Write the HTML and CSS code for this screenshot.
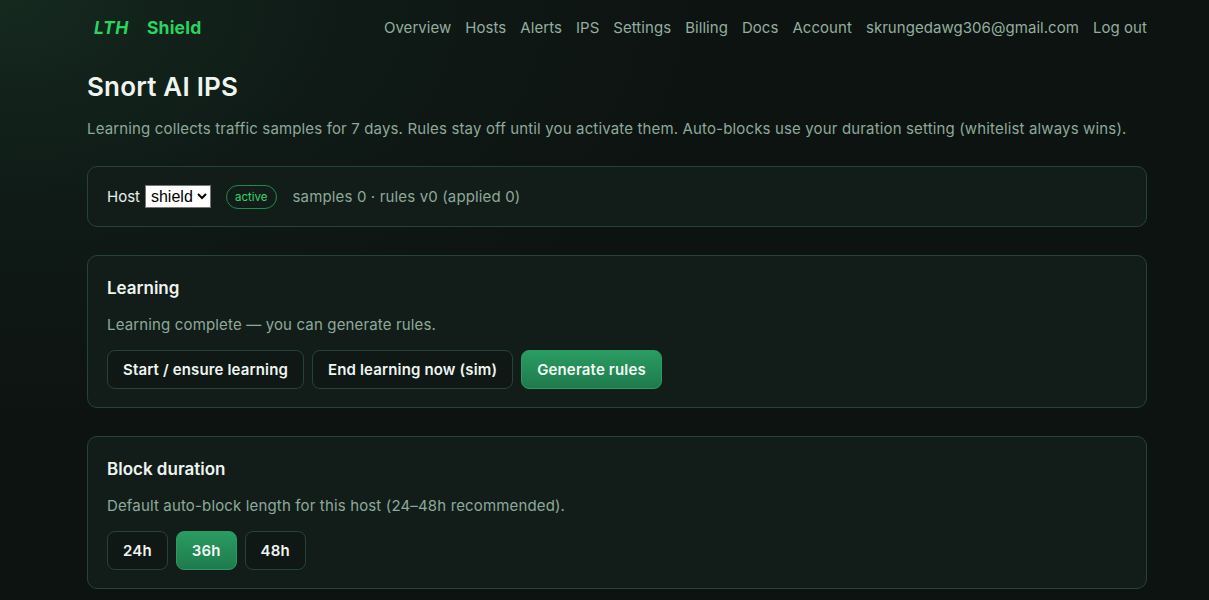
FILE: index.html
```html
<!DOCTYPE html>
<html lang="en">
<head>
<meta charset="utf-8">
<title>Snort AI IPS</title>
<link rel="stylesheet" href="styles.css">
</head>
<body>
<div class="page">
  <header class="topbar">
    <div class="brand"><span class="brand-mark">LTH</span><span class="brand-name">Shield</span></div>
    <nav class="nav">
      <a href="#">Overview</a>
      <a href="#">Hosts</a>
      <a href="#">Alerts</a>
      <a href="#">IPS</a>
      <a href="#">Settings</a>
      <a href="#">Billing</a>
      <a href="#">Docs</a>
      <a href="#">Account</a>
      <span class="email">skrungedawg306@gmail.com</span>
      <a href="#">Log out</a>
    </nav>
  </header>

  <main class="main">
    <h1 class="title">Snort AI IPS</h1>
    <p class="lead">Learning collects traffic samples for 7 days. Rules stay off until you activate them. Auto-blocks use your duration setting (whitelist always wins).</p>

    <section class="card card-row">
      <label class="host-label">Host
        <select class="host-select"><option>shield</option></select>
      </label>
      <span class="badge">active</span>
      <span class="meta">samples 0 · rules v0 (applied 0)</span>
    </section>

    <section class="card">
      <h2 class="card-title">Learning</h2>
      <p class="card-text">Learning complete — you can generate rules.</p>
      <div class="btn-row">
        <button class="btn">Start / ensure learning</button>
        <button class="btn">End learning now (sim)</button>
        <button class="btn btn-primary">Generate rules</button>
      </div>
    </section>

    <section class="card">
      <h2 class="card-title">Block duration</h2>
      <p class="card-text">Default auto-block length for this host (24–48h recommended).</p>
      <div class="btn-row">
        <button class="btn btn-sm">24h</button>
        <button class="btn btn-sm btn-primary">36h</button>
        <button class="btn btn-sm">48h</button>
      </div>
    </section>
  </main>
</div>
</body>
</html>
```

FILE: styles.css
```css
* { box-sizing: border-box; }
html, body { margin: 0; padding: 0; }
body {
  min-height: 600px;
  font-family: Inter, "Noto Sans", sans-serif;
  color: #e8f1ec;
  background-color: #0d1311;
  background-image: radial-gradient(ellipse 700px 420px at 0 0, #15291f 0%, #0f1a16 50%, #0d1311 100%);
}
.page {
  width: 1060px;
  margin: 0 0 0 87px;
}
.topbar {
  height: 54px;
  display: flex;
  align-items: center;
  justify-content: space-between;
}
.brand {
  display: flex;
  align-items: center;
  gap: 18px;
  padding-left: 7px;
  font-size: 17.5px;
  font-weight: 700;
  color: #2bd35f;
}
.brand-mark { font-style: italic; letter-spacing: 0.6px; }
.brand-name { letter-spacing: 0.2px; }
.nav {
  display: flex;
  align-items: center;
  gap: 14px;
  font-size: 15px;
  letter-spacing: 0.05px;
}
.nav a, .nav .email {
  color: #93ae9f;
  text-decoration: none;
}
.main { padding-top: 17px; }
.title {
  margin: 0;
  font-size: 26px;
  font-weight: 600;
  line-height: 32px;
  letter-spacing: 0.2px;
  color: #eef5f1;
}
.lead {
  margin: 15px 0 26px;
  font-size: 15px;
  line-height: 22px;
  letter-spacing: 0.15px;
  color: #8ea99a;
}
.card {
  background: #121d19;
  border: 1px solid #26433a;
  border-radius: 10px;
  padding: 20px 19px 18px;
  margin-bottom: 28px;
}
.card-row {
  display: flex;
  align-items: center;
  height: 61px;
  padding: 0 19px;
}
.host-label {
  display: flex;
  align-items: center;
  gap: 5px;
  font-size: 15px;
  color: #e8f1ec;
}
.host-select {
  font-family: "Liberation Sans", Arial, sans-serif;
  font-size: 16px;
  height: 23px;
  background: #ffffff;
  color: #000;
  border: 1px solid #767676;
  border-radius: 0;
  padding: 0 1px;
}
.badge {
  margin-left: 15px;
  font-size: 11.5px;
  line-height: 22px;
  padding: 0 8px;
  border: 1px solid #1f8a4f;
  border-radius: 999px;
  color: #35d46a;
}
.meta {
  margin-left: 16px;
  font-size: 15px;
  letter-spacing: 0.15px;
  color: #8ea99a;
}
.card-title {
  margin: 0;
  font-size: 17px;
  font-weight: 600;
  line-height: 24px;
  color: #eef5f1;
}
.card-text {
  margin: 14px 0 14px;
  font-size: 15px;
  line-height: 22px;
  letter-spacing: 0.15px;
  color: #8ea99a;
}
.btn-row {
  display: flex;
  gap: 8px;
}
.btn {
  font-family: inherit;
  font-size: 15px;
  font-weight: 600;
  letter-spacing: 0.15px;
  height: 39px;
  padding: 0 15px;
  border-radius: 8px;
  border: 1px solid #26433a;
  background: #0f1815;
  color: #eef5f1;
}
.btn-primary {
  background: linear-gradient(180deg, #2a9c62 0%, #1f7a4d 100%);
  border-color: #2a9c62;
  color: #f2fbf6;
}
```
